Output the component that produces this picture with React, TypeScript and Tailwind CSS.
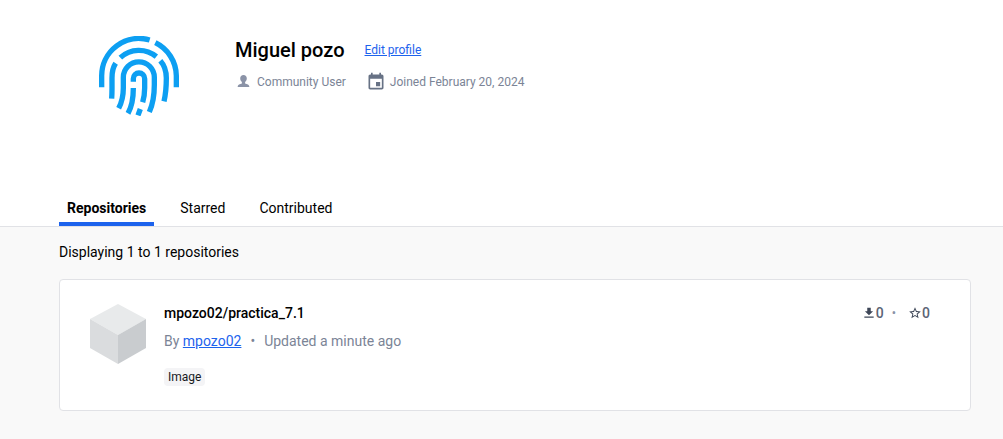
import React from "react";

function Fingerprint() {
  return (
    <svg
      className="h-20 w-20 shrink-0"
      viewBox="27 24 240 240"
      fill="none"
      stroke="#0d9ff2"
      strokeWidth="16"
      aria-hidden="true"
    >
      <path d="M35 178V143A112 112 0 0 1 179 36" />
      <path d="M196 44A112 112 0 0 1 259 143V178" />
      <path d="M91 89A82 82 0 0 1 199 86" />
      <path d="M77 106Q66 122 66 150V182Q66 196 65 212" />
      <path d="M211 98Q229 118 229 150Q229 190 222 220" />
      <path d="M86 241Q100 214 100 180V148A46.500 46.500 0 0 1 193 148V170Q193 218 178 252" />
      <path d="M130 161V152A17 17 0 0 1 164 152V180Q164 202 158 223" />
      <path d="M130 180Q130 228 114 256" />
      <path d="M151 243L144 262" />
    </svg>
  );
}

function PersonIcon() {
  return (
    <svg className="h-4 w-4" viewBox="0 0 16 16" fill="#8b93a7" aria-hidden="true">
      <path d="M8.500 1C6.500 1 5.200 2.300 5.200 4.300C5.200 5.900 5.900 7.200 6.900 8V9.500L4 10.500Q2.700 11.100 2.600 13H14.400Q14.300 11.100 13 10.500L10.100 9.500V8C11.100 7.200 11.800 5.900 11.800 4.300C11.800 2.300 10.500 1 8.500 1Z" />
    </svg>
  );
}

function CalendarIcon() {
  return (
    <svg className="h-5 w-5" viewBox="0 0 24 24" fill="#677285" aria-hidden="true">
      <path d="M17 12h-5v5h5v-5zM16 1v2H8V1H6v2H5c-1.110 0-1.990.9-1.990 2L3 19c0 1.100.89 2 2 2h14c1.100 0 2-.9 2-2V5c0-1.100-.9-2-2-2h-1V1h-2zm3 18H5V8h14v11z" />
    </svg>
  );
}

function Cube() {
  return (
    <svg className="h-15 w-14 shrink-0" viewBox="0 0 56 60" aria-hidden="true">
      <path d="M28 0L56 15L28 31L0 15Z" fill="#e8eaeb" />
      <path d="M0 15L28 31V60L0 44Z" fill="#dadcde" />
      <path d="M56 15L28 31V60L56 44Z" fill="#c9cccf" />
    </svg>
  );
}

function DownloadIcon() {
  return (
    <svg className="h-3.5 w-3.5" viewBox="0 0 24 24" fill="#3d4657" aria-hidden="true">
      <path d="M19 9h-4V3H9v6H5l7 7 7-7zM4 18v2h16v-2H4z" />
    </svg>
  );
}

function StarIcon() {
  return (
    <svg className="h-3.5 w-3.5" viewBox="0 0 24 24" fill="#3d4657" aria-hidden="true">
      <path d="M22 9.240l-7.190-.62L12 2 9.190 8.630 2 9.240l5.460 4.730L5.820 21 12 17.270 18.180 21l-1.630-7.030L22 9.240zM12 15.400l-3.760 2.270 1-4.280-3.320-2.880 4.380-.38L12 6.100l1.710 4.040 4.380.38-3.320 2.880 1 4.280L12 15.400z" />
    </svg>
  );
}

const tabs = ["Repositories", "Starred", "Contributed"];

export default function App() {
  const [active, setActive] = React.useState("Repositories");
  return (
    <div className="flex min-h-screen flex-col bg-[#f9f9f9] font-[Roboto,sans-serif] text-sm text-black">
      <header className="border-b border-[#e1e2e6] bg-white">
        <div className="flex gap-14 px-[99px] pt-9">
          <Fingerprint />
          <div>
            <div className="flex items-center gap-5">
              <h1 className="text-xl leading-7 font-medium">Miguel pozo</h1>
              <a href="#edit" className="text-xs leading-7 text-[#1d63ed] underline">
                Edit profile
              </a>
            </div>
            <div className="mt-2 flex items-center gap-5 text-xs leading-5 text-[#7b8496]">
              <span className="flex items-center gap-1.5">
                <PersonIcon />
                Community User
              </span>
              <span className="flex items-center gap-1">
                <CalendarIcon />
                Joined February 20, 2024
              </span>
            </div>
          </div>
        </div>
        <nav role="tablist" className="mt-[74px] flex gap-[18px] px-[59px]">
          {tabs.map((t) => (
            <button
              key={t}
              role="tab"
              aria-selected={t === active}
              onClick={() => setActive(t)}
              className={
                t === active
                  ? "border-b-4 border-[#1d63ed] px-2 pt-2 pb-1 leading-5 font-bold"
                  : "border-b-4 border-transparent px-2 pt-2 pb-1 leading-5"
              }
            >
              {t}
            </button>
          ))}
        </nav>
      </header>
      <main className="pt-[15px] pr-8 pb-7 pl-[59px]">
        <p className="leading-5">Displaying 1 to 1 repositories</p>
        <article className="mt-[17px] flex gap-[18px] rounded border border-[#e1e2e6] bg-white pt-6 pr-10 pb-6 pl-[30px]">
          <Cube />
          <div className="min-w-0 flex-1">
            <h2 className="-mt-px leading-5 font-medium">mpozo02/practica_7.1</h2>
            <p className="mt-2 flex gap-[9px] leading-5 text-[#7b8496]">
              <span>
                By{" "}
                <a href="#mpozo02" className="text-[#1d63ed] underline">
                  mpozo02
                </a>
              </span>
              <span>•</span>
              <span>Updated a minute ago</span>
            </p>
            <span className="mt-[17px] inline-block rounded bg-[#f4f4f6] px-1 text-xs leading-[18px] text-[#17191e]">
              Image
            </span>
          </div>
          <div className="-mt-px flex h-5 items-center font-medium text-[#5b6475]">
            <DownloadIcon />
            <span>0</span>
            <span className="mr-3 ml-2 text-xs text-[#8b93a7]">•</span>
            <StarIcon />
            <span>0</span>
          </div>
        </article>
      </main>
    </div>
  );
}
